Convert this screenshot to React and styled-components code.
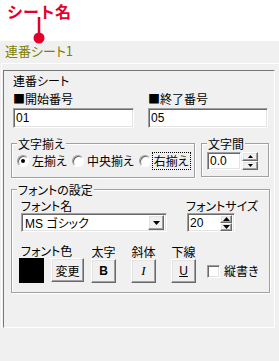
import React from 'react';
import styled, { createGlobalStyle, css } from 'styled-components';

const GlobalStyle = createGlobalStyle`
  html, body {
    margin: 0;
    padding: 0;
  }
  body {
    background: #f0f0f0;
    font-family: "Noto Sans CJK JP", "Liberation Sans", sans-serif;
    font-size: 12px;
    color: #000;
  }
`;

// classic win32 bevels
const sunken = css`
  border-style: solid;
  border-width: 1px;
  border-color: #a0a0a0 #ffffff #ffffff #a0a0a0;
  box-shadow: inset 1px 1px 0 #696969, inset -1px -1px 0 #e3e3e3;
  background: #ffffff;
  box-sizing: border-box;
`;

const raised = css`
  border-style: solid;
  border-width: 1px;
  border-color: #ffffff #696969 #696969 #ffffff;
  box-shadow: inset -1px -1px 0 #a0a0a0, inset 1px 1px 0 #e3e3e3;
  background: #f0f0f0;
  box-sizing: border-box;
`;

const Screen = styled.div`
  width: 279px;
  height: 361px;
  overflow: hidden;
  background: #f0f0f0;
  font-feature-settings: "palt";
`;

const Annotation = styled.div`
  position: relative;
  height: 41px;
  box-sizing: border-box;
  padding: 1px 0 0 7px;
  background: #ffffff;
`;

const AnnotationTitle = styled.div`
  font-size: 16px;
  line-height: 20px;
  font-weight: 700;
  color: #e4002b;
  font-feature-settings: normal;
`;

const Pointer = styled.svg`
  position: absolute;
  left: 32px;
  top: 16px;
  z-index: 1;
  overflow: visible;
`;

const TabStrip = styled.div`
  height: 22px;
  box-sizing: border-box;
  padding: 2px 0 0 5px;
  font-size: 13px;
  line-height: 16px;
  color: #808000;
`;

const TabBody = styled.div`
  margin-left: 1px;
  border-top: 1px solid #ffffff;
  border-left: 1px solid #ffffff;
  padding: 6px 0 0 1px;
`;

const Panel = styled.div`
  width: 272px;
  height: 258px;
  box-sizing: border-box;
  border-style: solid;
  border-width: 1px;
  border-color: #787878 #ffffff #ffffff #787878;
  padding: 3px 5px 0 7px;
`;

const SheetTitle = styled.div`
  line-height: 14px;
  padding-left: 2px;
`;

const NumberRow = styled.div`
  display: flex;
  gap: 14px;
  margin-top: 4px;
  padding-left: 2px;
`;

const Field = styled.div`
  display: flex;
  flex-direction: column;
  width: ${p => p.$width}px;
  margin-left: ${p => p.$offset || 0}px;
`;

const FieldLabel = styled.div`
  line-height: ${p => p.$lh || 14}px;
  white-space: nowrap;
  text-align: ${p => (p.$center ? 'center' : 'left')};
  margin-left: ${p => p.$indent || 0}px;
`;

const TextBox = styled.div`
  ${sunken};
  height: 20px;
  margin-top: 2px;
  padding: 1px 0 0 2px;
  font-family: "Liberation Sans", "Noto Sans CJK JP", sans-serif;
  font-size: 12px;
  line-height: 16px;
`;

const GroupRow = styled.div`
  display: flex;
  align-items: flex-start;
  margin-top: 9px;
`;

const Group = styled.fieldset`
  margin: 0 0 0 ${p => p.$offset || 0}px;
  min-width: 0;
  width: ${p => p.$width}px;
  box-sizing: border-box;
  border: 1px solid #a0a0a0;
  box-shadow: inset 1px 1px 0 #ffffff, 1px 1px 0 #ffffff;
  padding: ${p => p.$pad};
`;

const Legend = styled.legend`
  padding: 0 1px;
  line-height: 13px;
  font-size: 12px;
  background: #f0f0f0;
`;

const RadioRow = styled.div`
  display: flex;
  align-items: center;
  gap: 3px;
`;

const RadioItem = styled.label`
  display: flex;
  align-items: center;
  gap: 1px;
`;

const RadioDot = styled.span`
  position: relative;
  width: 12px;
  height: 12px;
  box-sizing: border-box;
  border-radius: 50%;
  border: 1px solid;
  border-color: #a0a0a0 #ffffff #ffffff #a0a0a0;
  box-shadow: inset 1px 1px 0 #696969;
  background: #ffffff;

  &::after {
    content: '';
    display: ${p => (p.$checked ? 'block' : 'none')};
    position: absolute;
    left: 3px;
    top: 3px;
    width: 4px;
    height: 4px;
    border-radius: 50%;
    background: #000;
  }
`;

const RadioText = styled.span`
  border: 1px dotted ${p => (p.$focused ? '#000' : 'transparent')};
  padding: 1px 1px;
  line-height: 14px;
  white-space: nowrap;
`;

const SpinField = styled.div`
  display: flex;
  gap: 1px;
  margin-left: 0;
`;

const SpinInput = styled.div`
  ${sunken};
  width: ${p => p.$width}px;
  height: ${p => p.$height}px;
  display: flex;
  align-items: center;
  justify-content: space-between;
  padding: 0 2px 0 2px;
  font-family: "Liberation Sans", sans-serif;
  font-size: 12px;
`;

const SpinColumn = styled.div`
  display: flex;
  flex-direction: column;
  gap: ${p => p.$gap || 0}px;
`;

const SpinButton = styled.div`
  ${raised};
  width: ${p => p.$width}px;
  height: ${p => p.$height}px;
  display: flex;
  align-items: center;
  justify-content: center;
`;

const FontTopRow = styled.div`
  display: flex;
  margin-top: 3px;
`;

const SelectBox = styled.div`
  ${sunken};
  width: 146px;
  height: 19px;
  margin-top: 1px;
  display: flex;
  align-items: center;
  justify-content: space-between;
  padding: 0 2px 0 3px;
  font-family: "Liberation Sans", "Noto Sans CJK JP", sans-serif;
  font-size: 12px;
  white-space: nowrap;
`;

const ButtonRow = styled.div`
  display: flex;
  align-items: flex-end;
  margin-top: 12px;
`;

const ControlPair = styled.div`
  display: flex;
  align-items: flex-start;
  margin-top: 1px;
  gap: 7px;
`;

const Swatch = styled.div`
  width: 25px;
  height: 25px;
  background: ${p => p.$color};
`;

const PushButton = styled.div`
  ${raised};
  width: ${p => p.$width}px;
  height: 24px;
  margin-top: ${p => p.$top || 0}px;
  display: flex;
  align-items: center;
  justify-content: center;
  font-size: 12px;
`;

const StyleGlyph = styled.span`
  font-family: ${p => (p.$italic ? '"Liberation Serif", serif' : '"Liberation Sans", sans-serif')};
  font-weight: ${p => (p.$bold ? 700 : 400)};
  font-style: ${p => (p.$italic ? 'italic' : 'normal')};
  text-decoration: ${p => (p.$underline ? 'underline' : 'none')};
  font-size: ${p => (p.$italic ? 13 : 12)}px;
`;

const CheckItem = styled.label`
  display: flex;
  align-items: center;
  gap: 4px;
  margin-left: 11px;
  margin-bottom: 5px;
  line-height: 14px;
`;

const CheckBox = styled.span`
  ${sunken};
  width: 13px;
  height: 13px;
`;

const Arrow = ({ dir = 'down', w = 7, h = 4 }) => (
  <svg width={w} height={h} viewBox={`0 0 ${w} ${h}`}>
    {dir === 'down' ? (
      <polygon points={`0,0 ${w},0 ${w / 2},${h}`} fill="#000" />
    ) : (
      <polygon points={`0,${h} ${w},${h} ${w / 2},0`} fill="#000" />
    )}
  </svg>
);

const alignments = [
  { label: '左揃え', checked: true },
  { label: '中央揃え' },
  { label: '右揃え', focused: true },
];

const styleButtons = [
  { label: '太字', glyph: 'B', bold: true, offset: 7 },
  { label: '斜体', glyph: 'I', italic: true, offset: 15 },
  { label: '下線', glyph: 'U', underline: true, offset: 15 },
];

export default function App() {
  return (
    <Screen>
      <GlobalStyle />
      <Annotation>
        <AnnotationTitle>シート名</AnnotationTitle>
        <Pointer width="14" height="30">
          <line x1="7" y1="1" x2="7" y2="19" stroke="#e4002b" strokeWidth="2.5" />
          <circle cx="7" cy="22" r="5.5" fill="#e4002b" />
        </Pointer>
      </Annotation>

      <TabStrip>連番シート1</TabStrip>

      <TabBody>
        <Panel>
          <SheetTitle>連番シート</SheetTitle>

          <NumberRow>
            <Field $width={121}>
              <FieldLabel>■開始番号</FieldLabel>
              <TextBox>01</TextBox>
            </Field>
            <Field $width={120}>
              <FieldLabel>■終了番号</FieldLabel>
              <TextBox>05</TextBox>
            </Field>
          </NumberRow>

          <GroupRow>
            <Group $width={184} $pad="2px 0 7px 5px">
              <Legend>文字揃え</Legend>
              <RadioRow>
                {alignments.map(a => (
                  <RadioItem key={a.label}>
                    <RadioDot $checked={a.checked} />
                    <RadioText $focused={a.focused}>{a.label}</RadioText>
                  </RadioItem>
                ))}
              </RadioRow>
            </Group>

            <Group $width={68} $offset={6} $pad="2px 0 6px 5px">
              <Legend>文字間</Legend>
              <SpinField>
                <SpinInput $width={34} $height={18}>0.0</SpinInput>
                <SpinColumn>
                  <SpinButton $width={16} $height={9}>
                    <Arrow dir="up" w={5} h={3} />
                  </SpinButton>
                  <SpinButton $width={16} $height={9}>
                    <Arrow dir="down" w={5} h={3} />
                  </SpinButton>
                </SpinColumn>
              </SpinField>
            </Group>
          </GroupRow>

          <Group $width={259} $pad="0 0 9px 5px" style={{ marginTop: 5 }}>
            <Legend>フォントの設定</Legend>
            <FontTopRow>
              <Field $width={146} $offset={4}>
                <FieldLabel $lh={13}>フォント名</FieldLabel>
                <SelectBox>
                  <span>MS ゴシック</span>
                  <SpinButton $width={16} $height={15}>
                    <Arrow dir="down" w={7} h={4} />
                  </SpinButton>
                </SelectBox>
              </Field>
              <Field $width={72} $offset={19}>
                <FieldLabel $lh={13}>フォントサイズ</FieldLabel>
                <SpinInput $width={48} $height={19} style={{ marginTop: 1, marginLeft: 1 }}>
                  <span>20</span>
                  <SpinColumn>
                    <SpinButton $width={12} $height={8}>
                      <Arrow dir="up" w={7} h={4} />
                    </SpinButton>
                    <SpinButton $width={12} $height={8}>
                      <Arrow dir="down" w={7} h={4} />
                    </SpinButton>
                  </SpinColumn>
                </SpinInput>
              </Field>
            </FontTopRow>

            <ButtonRow>
              <Field $width={65} $offset={2}>
                <FieldLabel $lh={13} $indent={2}>フォント色</FieldLabel>
                <ControlPair>
                  <Swatch $color="#000000" />
                  <PushButton $width={33}>変更</PushButton>
                </ControlPair>
              </Field>
              {styleButtons.map(b => (
                <Field key={b.label} $width={25} $offset={b.offset}>
                  <FieldLabel $lh={13} $center>{b.label}</FieldLabel>
                  <PushButton $width={25} $top={1}>
                    <StyleGlyph $bold={b.bold} $italic={b.italic} $underline={b.underline}>
                      {b.glyph}
                    </StyleGlyph>
                  </PushButton>
                </Field>
              ))}
              <CheckItem>
                <CheckBox />
                <span>縦書き</span>
              </CheckItem>
            </ButtonRow>
          </Group>
        </Panel>
      </TabBody>
    </Screen>
  );
}
